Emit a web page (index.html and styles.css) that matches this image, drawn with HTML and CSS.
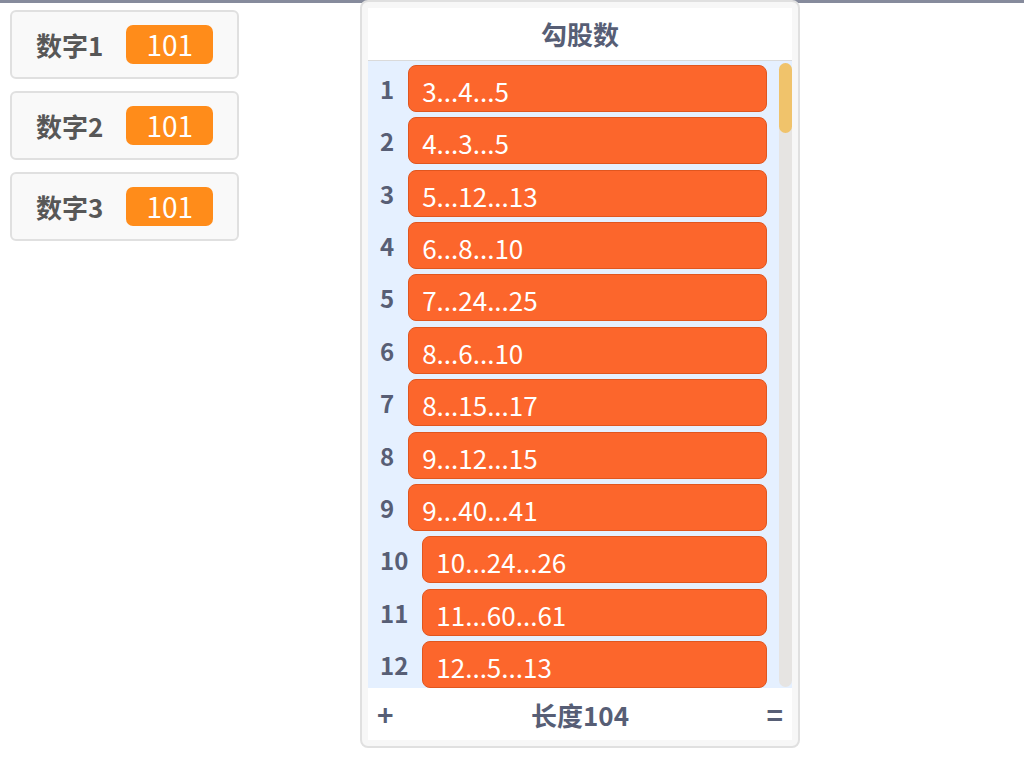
FILE: index.html
```html
<!DOCTYPE html>
<html lang="zh">
<head>
    <meta charset="UTF-8">
    <title>勾股数</title>
    <link rel="stylesheet" href="styles.css">
</head>
<body>
    <div class="stage">
        <div class="var-list">
            <div class="var-monitor">
                <span class="var-label">数字1</span>
                <span class="var-value">101</span>
            </div>
            <div class="var-monitor">
                <span class="var-label">数字2</span>
                <span class="var-value">101</span>
            </div>
            <div class="var-monitor">
                <span class="var-label">数字3</span>
                <span class="var-value">101</span>
            </div>
        </div>

        <div class="list-monitor">
            <div class="list-inner">
                <div class="list-header">勾股数</div>
                <div class="list-body">
                    <div class="list-rows">
                        <div class="list-row"><span class="list-index">1</span><div class="list-item">3...4...5</div></div>
                        <div class="list-row"><span class="list-index">2</span><div class="list-item">4...3...5</div></div>
                        <div class="list-row"><span class="list-index">3</span><div class="list-item">5...12...13</div></div>
                        <div class="list-row"><span class="list-index">4</span><div class="list-item">6...8...10</div></div>
                        <div class="list-row"><span class="list-index">5</span><div class="list-item">7...24...25</div></div>
                        <div class="list-row"><span class="list-index">6</span><div class="list-item">8...6...10</div></div>
                        <div class="list-row"><span class="list-index">7</span><div class="list-item">8...15...17</div></div>
                        <div class="list-row"><span class="list-index">8</span><div class="list-item">9...12...15</div></div>
                        <div class="list-row"><span class="list-index">9</span><div class="list-item">9...40...41</div></div>
                        <div class="list-row"><span class="list-index">10</span><div class="list-item">10...24...26</div></div>
                        <div class="list-row"><span class="list-index">11</span><div class="list-item">11...60...61</div></div>
                        <div class="list-row"><span class="list-index">12</span><div class="list-item">12...5...13</div></div>
                    </div>
                    <div class="scrollbar">
                        <div class="scroll-thumb"></div>
                    </div>
                </div>
                <div class="list-footer">
                    <span class="footer-btn">+</span>
                    <span class="list-length">长度104</span>
                    <span class="footer-btn footer-end">=</span>
                </div>
            </div>
        </div>
    </div>
</body>
</html>
```

FILE: styles.css
```css
body {
    margin: 0;
    background: #fff;
    font-family: "Noto Sans CJK SC", "Noto Sans", sans-serif;
}
.stage {
    display: flex;
    align-items: flex-start;
    border-top: 3px solid #868b9c;
    height: 757px;
}

/* variable monitors */
.var-list {
    display: flex;
    flex-direction: column;
    gap: 12px;
    margin: 7px 0 0 10px;
    width: 229px;
}
.var-monitor {
    box-sizing: border-box;
    height: 69px;
    display: flex;
    align-items: center;
    gap: 23px;
    padding-left: 24px;
    background: #f9f9f9;
    border: 2px solid #e0e0e0;
    border-radius: 6px;
}
.var-label {
    font-size: 26px;
    font-weight: bold;
    color: #575757;
}
.var-value {
    width: 87px;
    height: 39px;
    line-height: 39px;
    text-align: center;
    background: #ff8c1a;
    color: #fff;
    font-size: 28px;
    border-radius: 7px;
}

/* list monitor */
.list-monitor {
    box-sizing: border-box;
    width: 440px;
    height: 748px;
    margin: -3px 0 0 121px;
    padding: 6px;
    background: #f7f7f7;
    border: 2px solid #e0e0e0;
    border-radius: 8px;
}
.list-inner {
    height: 100%;
    display: flex;
    flex-direction: column;
    background: #fff;
}
.list-header {
    height: 52px;
    line-height: 52px;
    text-align: center;
    font-size: 26px;
    font-weight: bold;
    color: #575e75;
    border-bottom: 1px solid #dadada;
}
.list-body {
    flex: 1;
    display: flex;
    overflow: hidden;
    background: #e5f0ff;
}
.list-rows {
    flex: 1;
    display: flex;
    flex-direction: column;
    gap: 5.36px;
    padding: 4px 12px 0 12px;
}
.list-row {
    display: flex;
    align-items: center;
    height: 47px;
    flex-shrink: 0;
}
.list-index {
    font-size: 24px;
    font-weight: bold;
    color: #575e75;
    margin-right: 14px;
}
.list-item {
    flex: 1;
    box-sizing: border-box;
    height: 47px;
    padding: 6px 0 0 13px;
    line-height: 38px;
    font-size: 26px;
    color: #fff;
    background: #fc662c;
    border: 1px solid #e0561f;
    border-radius: 8px;
}
.scrollbar {
    width: 13px;
    margin: 2px 0 1px;
    background: #e6e4e2;
    border-radius: 7px;
}
.scroll-thumb {
    height: 70px;
    background: #f0c36b;
    border-radius: 7px;
}
.list-footer {
    height: 52px;
    display: grid;
    grid-template-columns: 1fr auto 1fr;
    align-items: center;
    padding: 0 9px;
    color: #575e75;
    font-weight: bold;
}
.footer-btn {
    font-size: 28px;
}
.footer-end {
    justify-self: end;
}
.list-length {
    font-size: 26px;
}
```
